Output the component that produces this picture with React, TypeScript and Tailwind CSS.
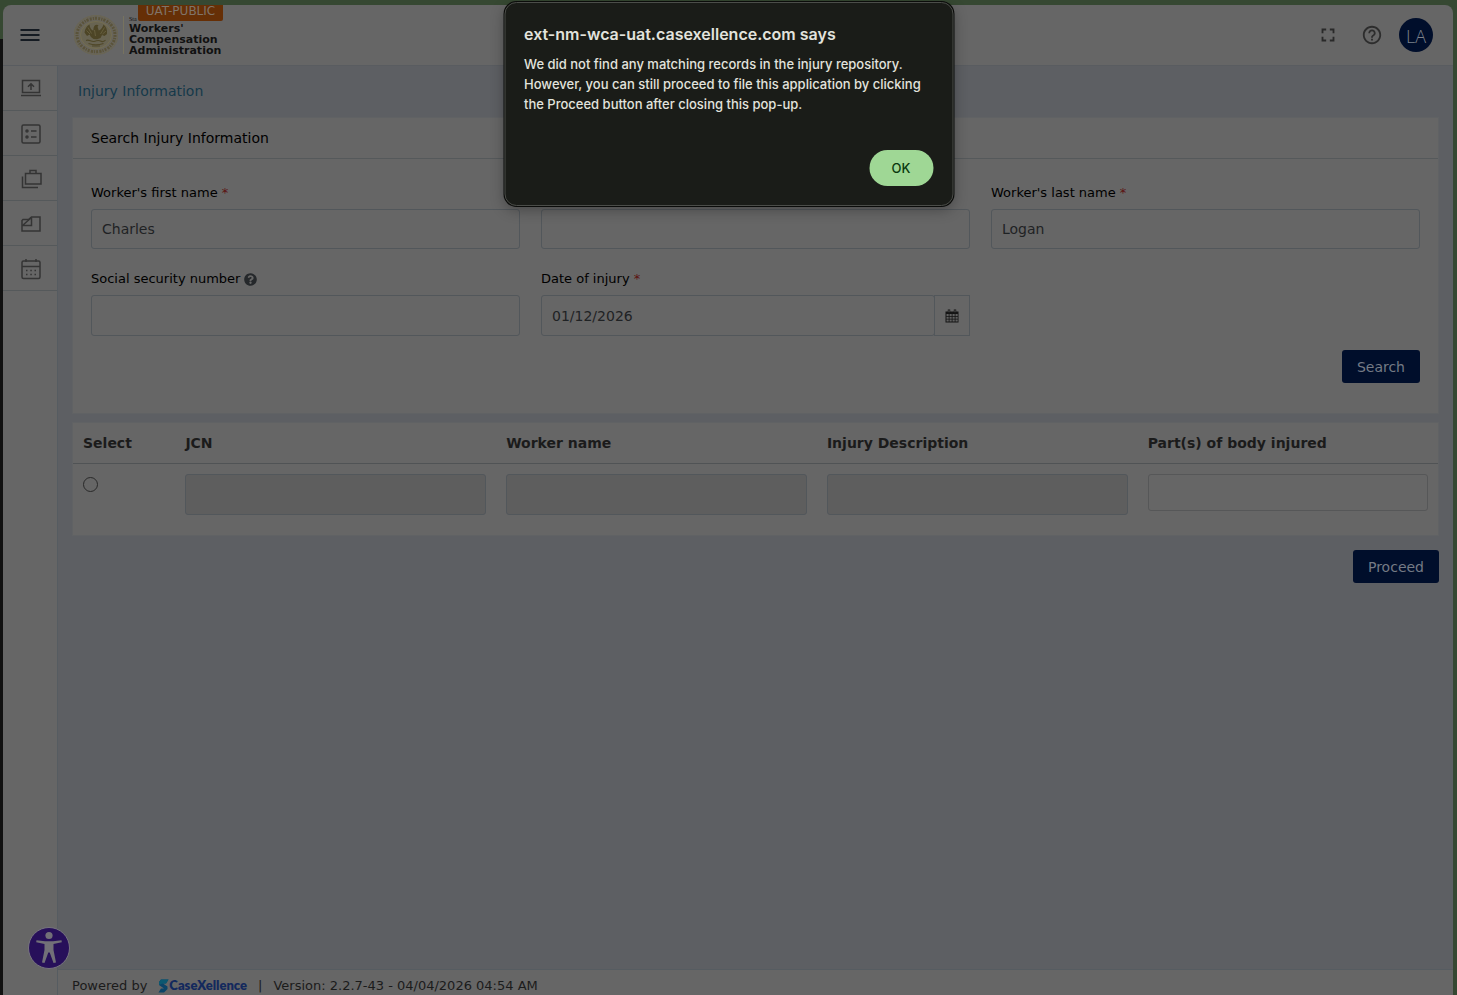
import React from "react";
import { FaQuestionCircle } from "react-icons/fa";
import { MdFullscreen, MdHelpOutline } from "react-icons/md";

const inputClass =
  "block w-full rounded-[3px] border border-[#52575b] bg-[#666] px-[10px] text-sm text-[#1f2224] outline-none";

function Seal() {
  return (
    <svg viewBox="0 0 44 40" className="h-10 w-11" aria-hidden="true">
      <ellipse cx="22" cy="20" rx="22" ry="19.5" fill="#69645080" stroke="#6f684a" strokeWidth="0.6" />
      <ellipse cx="22" cy="20" rx="19" ry="16.700" fill="none" stroke="#5a533a" strokeWidth="3" strokeDasharray="1.9 1.1 1.2 0.9 2.2 1.3" />
      <ellipse cx="22" cy="20" rx="15.500" ry="13.500" fill="#686452" stroke="#77704f" strokeWidth="0.8" />
      <path
        d="M10.500 17.500c.5-4 2.500-6.500 5-8 .2 3 1.500 5 3.800 6.300.2-2.300.4-4.300 1.700-5.500 1-.9 2.800-.7 3.500.2l-1 1.200c.6 1.500.9 2.600 1.200 3.800 2.300-.8 4-3 4.800-6 2.500 2 4 5 3.500 9.500l-2.500 2-2.500-1-1.500 3-3.500 1.200-3.500-.2-2.500-2-1.500-2.500-2.500 1.500z"
        fill="#4d4526"
      />
      <path d="M14 12.500l3.500 6M30.500 12.500l-4 6.500M12.500 15.500l3.500 3.500M32 16l-3.500 3M20.500 15l1 6" stroke="#706947" strokeWidth="0.7" />
      <path d="M12 25.500c3-1.500 5 1.500 8 1s4-2 6.500-.5 4 0 5-.8M14.500 28.500c4 1.300 11 1.300 15 0M18 31h8" fill="none" stroke="#504829" strokeWidth="1.100" />
    </svg>
  );
}

const sideItems = [
  {
    label: "File online",
    d: (
      <>
        <path d="M3.500 3.500h17v12h-17zM2 18.500h20" />
        <path d="M12 13V7m-3 2.800L12 6.800l3 3" />
      </>
    ),
  },
  {
    label: "Task list",
    d: (
      <>
        <rect x="3" y="3" width="18" height="18" rx="1.500" />
        <path d="M12 9h5.500M12 15h5.500" />
        <circle cx="8" cy="9" r="1" />
        <circle cx="8" cy="15" r="1" />
      </>
    ),
  },
  {
    label: "Cases",
    d: (
      <>
        <path d="M6.500 6.500h15.500v10.500H6.500zM11 6.500v-3h6v3" />
        <path d="M3.500 9.500v11h15.500" />
      </>
    ),
  },
  {
    label: "Documents",
    d: (
      <>
        <path d="M4 7.500h5.500L12.500 5H21v14H3V8.500z" />
        <path d="M3 13.500h9.500V5.500M3.500 13.500l9-8" />
      </>
    ),
  },
  {
    label: "Calendar",
    d: (
      <>
        <rect x="3" y="4" width="18" height="17.500" rx="1.500" />
        <path d="M3 9.500h18M7 2v3M17 2v3" />
        <path d="M7 13.500h1.500M11.300 13.500h1.500M15.500 13.500H17M7 17.500h1.500M11.300 17.500h1.500M15.500 17.500H17" />
      </>
    ),
  },
];

function Header() {
  return (
    <header className="flex h-[61px] shrink-0 items-center border-b border-[#595c60] pr-5">
      <button aria-label="Toggle menu" className="flex w-[54px] justify-center">
        <svg viewBox="0 0 20 14" className="h-[14px] w-5" stroke="#151b22" strokeWidth="2" aria-hidden="true">
          <path d="M0.500 2h19M0.500 7h19M0.500 12h19" />
        </svg>
      </button>
      <a href="#home" className="relative ml-[17px] flex items-center">
        <Seal />
        <span className="mx-[5px] h-[38px] w-px bg-[#77735f]" />
        <span className="flex flex-col pt-[2px] text-[11px] font-bold leading-[11px] text-[#111]">
          <span className="h-[7px] font-['Liberation_Serif',serif] text-[6px] font-normal leading-[7px]">Sta</span>
          <span>Workers'</span>
          <span>Compensation</span>
          <span>Administration</span>
        </span>
        <span className="absolute -top-[10px] left-[64px] flex h-[17px] w-[85px] items-center justify-center rounded-b-[2px] bg-[#662f06] pb-1 text-xs text-[#807469]">
          UAT-PUBLIC
        </span>
      </a>
      <div className="ml-auto flex items-center">
        <button aria-label="Full screen" className="mr-[22px] text-[#292929]">
          <MdFullscreen size={22} />
        </button>
        <button aria-label="Help" className="mr-4 text-[#2d2d2d]">
          <MdHelpOutline size={22} />
        </button>
        <button className="flex size-[34px] items-center justify-center rounded-full bg-[#000e2b] pt-[2px] font-['Open_Sans',sans-serif] text-lg font-light text-[#7d828c]">
          LA
        </button>
      </div>
    </header>
  );
}

function Sidebar() {
  return (
    <aside className="w-[55px] shrink-0 border-r border-[#565c61]">
      <nav>
        {sideItems.map((item) => (
          <a
            key={item.label}
            href="#menu"
            aria-label={item.label}
            className="flex h-[45px] items-center justify-center border-b border-[#55595b] pt-px pl-px"
          >
            <svg viewBox="0 0 24 24" className="size-6" fill="none" stroke="#343434" strokeWidth="1.5" aria-hidden="true">
              {item.d}
            </svg>
          </a>
        ))}
      </nav>
    </aside>
  );
}

function Label({ id, text, required }: { id: string; text: string; required?: boolean }) {
  return (
    <label htmlFor={id} className="flex h-5 items-center whitespace-pre text-[13px] text-black">
      {text}
      {required && <span className="text-[#5c1111]"> *</span>}
    </label>
  );
}

function SearchCard() {
  return (
    <section className="border border-[#606264] bg-[#666]">
      <h2 className="flex h-[41px] items-center border-b border-[#55595b] px-[18px] text-sm text-black">
        Search Injury Information
      </h2>
      <form className="px-[18px] pt-6 pb-[30px]" onSubmit={(e) => e.preventDefault()}>
        <div className="grid grid-cols-3 gap-x-[21px] gap-y-5">
          <div>
            <Label id="first" text="Worker's first name" required />
            <input id="first" defaultValue="Charles" className={`${inputClass} mt-[6px] h-10`} />
          </div>
          <div>
            <Label id="middle" text="Worker's middle name" />
            <input id="middle" className={`${inputClass} mt-[6px] h-10`} />
          </div>
          <div>
            <Label id="last" text="Worker's last name" required />
            <input id="last" defaultValue="Logan" className={`${inputClass} mt-[6px] h-10`} />
          </div>
          <div>
            <div className="flex items-center gap-1">
              <Label id="ssn" text="Social security number" />
              <FaQuestionCircle size={13} className="text-[#25282b]" />
            </div>
            <input id="ssn" className={`${inputClass} mt-[6px] h-[41px]`} />
          </div>
          <div>
            <Label id="doi" text="Date of injury" required />
            <div className="mt-[6px] flex">
              <input id="doi" defaultValue="01/12/2026" className={`${inputClass} h-[41px] min-w-0 flex-1`} />
              <button
                type="button"
                aria-label="Choose date"
                className="-ml-px flex w-9 items-center justify-center border border-[#52575b] text-black"
              >
                <svg viewBox="0 0 14 14" className="size-[14px]" aria-hidden="true">
                  <path d="M0.500 2.500h13v11h-13z" fill="#151515" />
                  <path
                    d="M1.500 5h2.200v2H1.500zM4.500 5h2.200v2H4.500zM7.500 5h2.200v2H7.500zM10.500 5h2.200v2h-2.200zM1.500 7.800h2.200v2H1.500zM4.500 7.800h2.200v2H4.500zM7.500 7.800h2.200v2H7.500zM10.500 7.800h2.200v2h-2.200zM1.500 10.600h2.200v2H1.500zM4.500 10.600h2.200v2H4.500zM7.500 10.600h2.200v2H7.500zM10.500 10.600h2.200v2h-2.200z"
                    fill="#606060"
                  />
                  <path d="M4 0.500v3.300M10 0.500v3.300" stroke="#151515" strokeWidth="2.400" />
                  <path d="M4 1.200v2M10 1.200v2" stroke="#606060" strokeWidth="0.900" />
                </svg>
              </button>
            </div>
          </div>
        </div>
        <div className="mt-[14px] flex justify-end">
          <button type="submit" className="h-[33px] rounded-[3px] bg-[#000e2b] px-[15px] text-sm text-[#747a85]">
            Search
          </button>
        </div>
      </form>
    </section>
  );
}

const columns = ["JCN", "Worker name", "Injury Description", "Part(s) of body injured"];

function ResultsTable() {
  return (
    <section className="mt-2 border border-[#606264] bg-[#666]">
      <table className="w-full table-fixed text-left text-sm text-[#1b1b1b]">
        <colgroup>
          <col className="w-[7.5%]" />
          <col className="w-[23.5%]" />
          <col className="w-[23.5%]" />
          <col className="w-[23.5%]" />
          <col className="w-[22%]" />
        </colgroup>
        <thead>
          <tr className="h-10 border-b border-[#505355]">
            <th className="px-[10px]">Select</th>
            {columns.map((c) => (
              <th key={c} className="px-[10px]">{c}</th>
            ))}
          </tr>
        </thead>
        <tbody>
          <tr className="h-[72px] align-top">
            <td className="px-[10px] pt-[13px]">
              <input
                type="radio"
                aria-label="Select record"
                className="block size-[15px] appearance-none rounded-full border border-[#292929]"
              />
            </td>
            {columns.map((c, i) => (
              <td key={c} className="px-[10px] pt-[10px]">
                <input
                  aria-label={c}
                  disabled={i < 3}
                  className={
                    i < 3
                      ? "block h-[41px] w-full rounded-[3px] border border-[#52575b] bg-[#5e5e5e] px-[10px]"
                      : "block h-[37px] w-full rounded-[3px] border border-[#565758] bg-[#666] px-[10px]"
                  }
                />
              </td>
            ))}
          </tr>
        </tbody>
      </table>
    </section>
  );
}

function Footer() {
  return (
    <footer className="flex h-[26px] shrink-0 items-center gap-[11px] whitespace-nowrap border-t border-[#565c61] bg-[#666] px-[14px] pt-[6px] text-[13px] text-[#1b1b1b]">
      <span>Powered by</span>
      <a href="#vendor" className="flex items-center font-['Lato',sans-serif] text-[13px] font-extrabold text-[#13295d]">
        <svg viewBox="0 0 11 14" className="h-[14px] w-[11px]" aria-hidden="true">
          <path d="M3 0.500h7.500L8 4.500H5l4.500 3V10L6 13.500H0.500L3 9.500h3L1 6V3z" fill="#0b4468" />
          <path d="M3 0.500h7.500L8 4.500H5L1 6V3z" fill="#0c5870" />
        </svg>
        <span>CaseXellence</span>
      </a>
      <span>|</span>
      <span>Version: 2.2.7-43 - 04/04/2026 04:54 AM</span>
    </footer>
  );
}

function AlertDialog() {
  return (
    <div
      role="alertdialog"
      aria-labelledby="alert-title"
      aria-describedby="alert-text"
      className="absolute top-[2px] left-1/2 flex h-[204px] w-[449px] -translate-x-1/2 flex-col rounded-xl border border-[#4b4d49] bg-[#1a1c18] px-[19px] pt-5 pb-[19px] font-['Inter',sans-serif] text-[#e2e3dd] shadow-[0_0_0_1px_#0b0c0a,0_4px_14px_rgba(0,0,0,0.3)]"
    >
      <h1 id="alert-title" className="text-base font-semibold leading-[22px]">
        ext-nm-wca-uat.casexellence.com says
      </h1>
      <p id="alert-text" className="mt-[9px] text-[13px] font-medium leading-5">
        We did not find any matching records in the injury repository. However, you can still proceed to file this
        application by clicking the Proceed button after closing this pop-up.
      </p>
      <button className="mt-auto h-9 w-16 self-end rounded-full bg-[#9fd795] pt-px text-[13px] font-medium text-[#0a390e]">
        OK
      </button>
    </div>
  );
}

export default function App() {
  return (
    <div className="relative flex h-screen flex-col overflow-hidden bg-[#364832] pt-[5px] pr-1 font-['DejaVu_Sans','Verdana',sans-serif]">
      <div className="absolute top-[39px] bottom-0 left-0 w-[3px] bg-[#111]" />
      <div className="relative ml-[3px] flex min-h-0 flex-1 flex-col overflow-hidden rounded-t-lg bg-[#666]">
        <Header />
        <div className="flex min-h-0 flex-1">
          <Sidebar />
          <div className="flex min-w-0 flex-1 flex-col bg-[#5d5f63]">
            <main className="min-h-0 flex-1 pr-[14px] pl-[14px]">
              <div className="flex h-[51px] items-center px-[6px] pb-[2px] text-sm text-[#15394a]">Injury Information</div>
              <SearchCard />
              <ResultsTable />
              <div className="mt-[14px] flex justify-end">
                <button className="h-[33px] rounded-[3px] bg-[#000e2b] px-[15px] text-sm text-[#747a85]">Proceed</button>
              </div>
            </main>
            <Footer />
          </div>
        </div>
      </div>
      <button
        aria-label="Accessibility options"
        className="absolute bottom-[26px] left-7 flex size-[42px] items-center justify-center rounded-full border border-[#77747f] bg-[#27105a]"
      >
        <svg viewBox="0 0 40 40" className="size-10" fill="#727078" aria-hidden="true">
          <circle cx="20" cy="7.500" r="3.600" />
          <path d="M7.500 12.200l8.500 1h8l8.500-1 .3 2-8.300 1.800v6l2.500 12.500-2.500.5-3.800-10.500h-1.400L15.500 35l-2.500-.5L15.500 22v-6l-8.300-1.800z" />
        </svg>
      </button>
      <AlertDialog />
    </div>
  );
}
